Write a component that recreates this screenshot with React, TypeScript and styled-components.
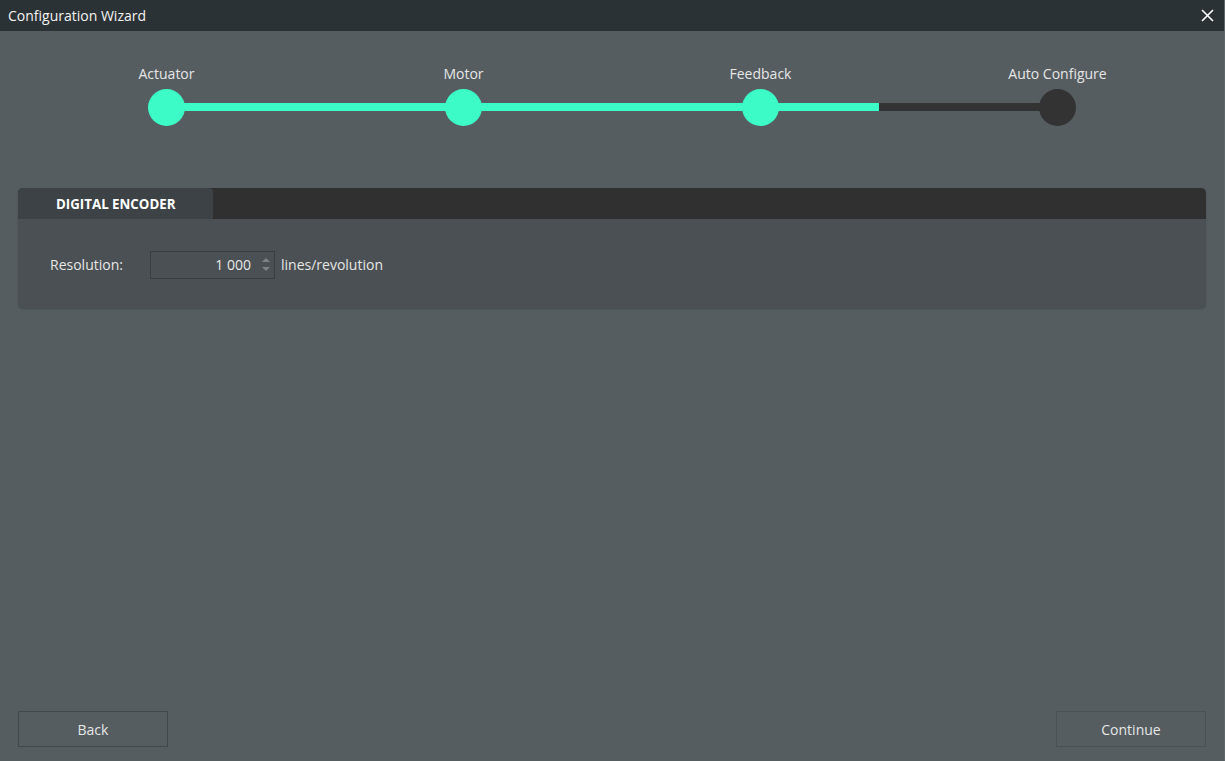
import React from 'react';
import styled, { createGlobalStyle } from 'styled-components';

const GlobalStyle = createGlobalStyle`
  html, body {
    margin: 0;
    padding: 0;
    background: #555d60;
  }
  * {
    box-sizing: border-box;
  }
`;

const Window = styled.div`
  display: flex;
  flex-direction: column;
  width: 100vw;
  height: 100vh;
  background: #555d60;
  font-family: 'Open Sans', 'Noto Sans', sans-serif;
  color: #e8e8e8;
  border-right: 1px solid #5f676a;
  overflow: hidden;
`;

const TitleBar = styled.div`
  height: 31px;
  flex: none;
  display: flex;
  align-items: center;
  justify-content: space-between;
  padding: 0 9px 0 8px;
  background: #2b3235;
  font-size: 14px;
  color: #f2f2f2;
`;

const CloseButton = styled.button`
  width: 16px;
  height: 16px;
  padding: 0;
  border: none;
  background: transparent;
  display: flex;
  align-items: center;
  justify-content: center;
  cursor: pointer;
`;

const Content = styled.div`
  flex: 1;
  display: flex;
  flex-direction: column;
  padding: 33px 18px 14px 18px;
`;

const Stepper = styled.div`
  position: relative;
  display: grid;
  grid-template-columns: repeat(4, 1fr);
`;

const Track = styled.div`
  position: absolute;
  left: 12.5%;
  right: 12.5%;
  top: 39px;
  height: 8px;
  background: #333333;
`;

const TrackFill = styled.div`
  height: 100%;
  background: #3dfbc6;
`;

const Step = styled.div`
  position: relative;
  display: flex;
  flex-direction: column;
  align-items: center;
  gap: 5px;
`;

const StepLabel = styled.div`
  font-size: 14px;
  line-height: 20px;
  color: #e6e6e6;
`;

const StepDot = styled.div<{ $done: boolean }>`
  width: 37px;
  height: 37px;
  border-radius: 50%;
  background: ${(p) => (p.$done ? '#3dfbc6' : '#333333')};
`;

const Panel = styled.div`
  margin-top: 62px;
  border-radius: 5px;
  overflow: hidden;
  background: #4a5053;
  box-shadow: 0 1px 2px rgba(0, 0, 0, 0.2);
`;

const PanelHeader = styled.div`
  height: 31px;
  display: flex;
  background: #303030;
`;

const Tab = styled.div`
  width: 195px;
  display: flex;
  align-items: center;
  padding-left: 38px;
  background: #3c4245;
  border-top-right-radius: 4px;
  font-size: 13.3px;
  font-weight: 700;
  color: #ffffff;
`;

const PanelBody = styled.div`
  height: 89px;
  display: flex;
  align-items: center;
  padding: 2px 32px 0 32px;
  font-size: 14px;
  color: #e6e6e6;
`;

const FieldLabel = styled.span`
  width: 100px;
`;

const NumberBox = styled.div`
  width: 125px;
  height: 28px;
  display: flex;
  align-items: center;
  justify-content: flex-end;
  border: 1px solid #393e41;
  background: #4a5053;
  padding-right: 3px;
`;

const NumberValue = styled.span`
  font-size: 14px;
  color: #e8e8e8;
`;

const Spinner = styled.div`
  display: flex;
  flex-direction: column;
  gap: 5px;
  margin-left: 10px;
  width: 10px;
  align-items: center;
`;

const Unit = styled.span`
  margin-left: 6px;
`;

const Spacer = styled.div`
  flex: 1;
`;

const Footer = styled.div`
  display: flex;
  justify-content: space-between;
`;

const WizardButton = styled.button<{ $primary?: boolean }>`
  width: 150px;
  height: 36px;
  background: transparent;
  border: 1px solid ${(p) => (p.$primary ? '#4b5255' : '#41474a')};
  font-family: 'Open Sans', 'Noto Sans', sans-serif;
  font-size: 14px;
  color: #e6e6e6;
  cursor: pointer;
`;

const steps = [
  { label: 'Actuator', done: true },
  { label: 'Motor', done: true },
  { label: 'Feedback', done: true },
  { label: 'Auto Configure', done: false },
];

const App = () => {
  const progress = 80;

  return (
    <>
      <GlobalStyle />
      <Window>
        <TitleBar>
          Configuration Wizard
          <CloseButton aria-label="Close">
            <svg width="13" height="13" viewBox="0 0 13 13">
              <path d="M1 1 L12 12 M12 1 L1 12" stroke="#ffffff" strokeWidth="1.6" />
            </svg>
          </CloseButton>
        </TitleBar>
        <Content>
          <Stepper>
            <Track>
              <TrackFill style={{ width: `${progress}%` }} />
            </Track>
            {steps.map((s) => (
              <Step key={s.label}>
                <StepLabel>{s.label}</StepLabel>
                <StepDot $done={s.done} />
              </Step>
            ))}
          </Stepper>

          <Panel>
            <PanelHeader>
              <Tab>DIGITAL ENCODER</Tab>
            </PanelHeader>
            <PanelBody>
              <FieldLabel>Resolution:</FieldLabel>
              <NumberBox>
                <NumberValue>1 000</NumberValue>
                <Spinner>
                  <svg width="8" height="4" viewBox="0 0 8 4">
                    <path d="M0 4 L4 0 L8 4 Z" fill="#7d8386" />
                  </svg>
                  <svg width="8" height="4" viewBox="0 0 8 4">
                    <path d="M0 0 L4 4 L8 0 Z" fill="#7d8386" />
                  </svg>
                </Spinner>
              </NumberBox>
              <Unit>lines/revolution</Unit>
            </PanelBody>
          </Panel>

          <Spacer />

          <Footer>
            <WizardButton>Back</WizardButton>
            <WizardButton $primary>Continue</WizardButton>
          </Footer>
        </Content>
      </Window>
    </>
  );
};

export default App;
